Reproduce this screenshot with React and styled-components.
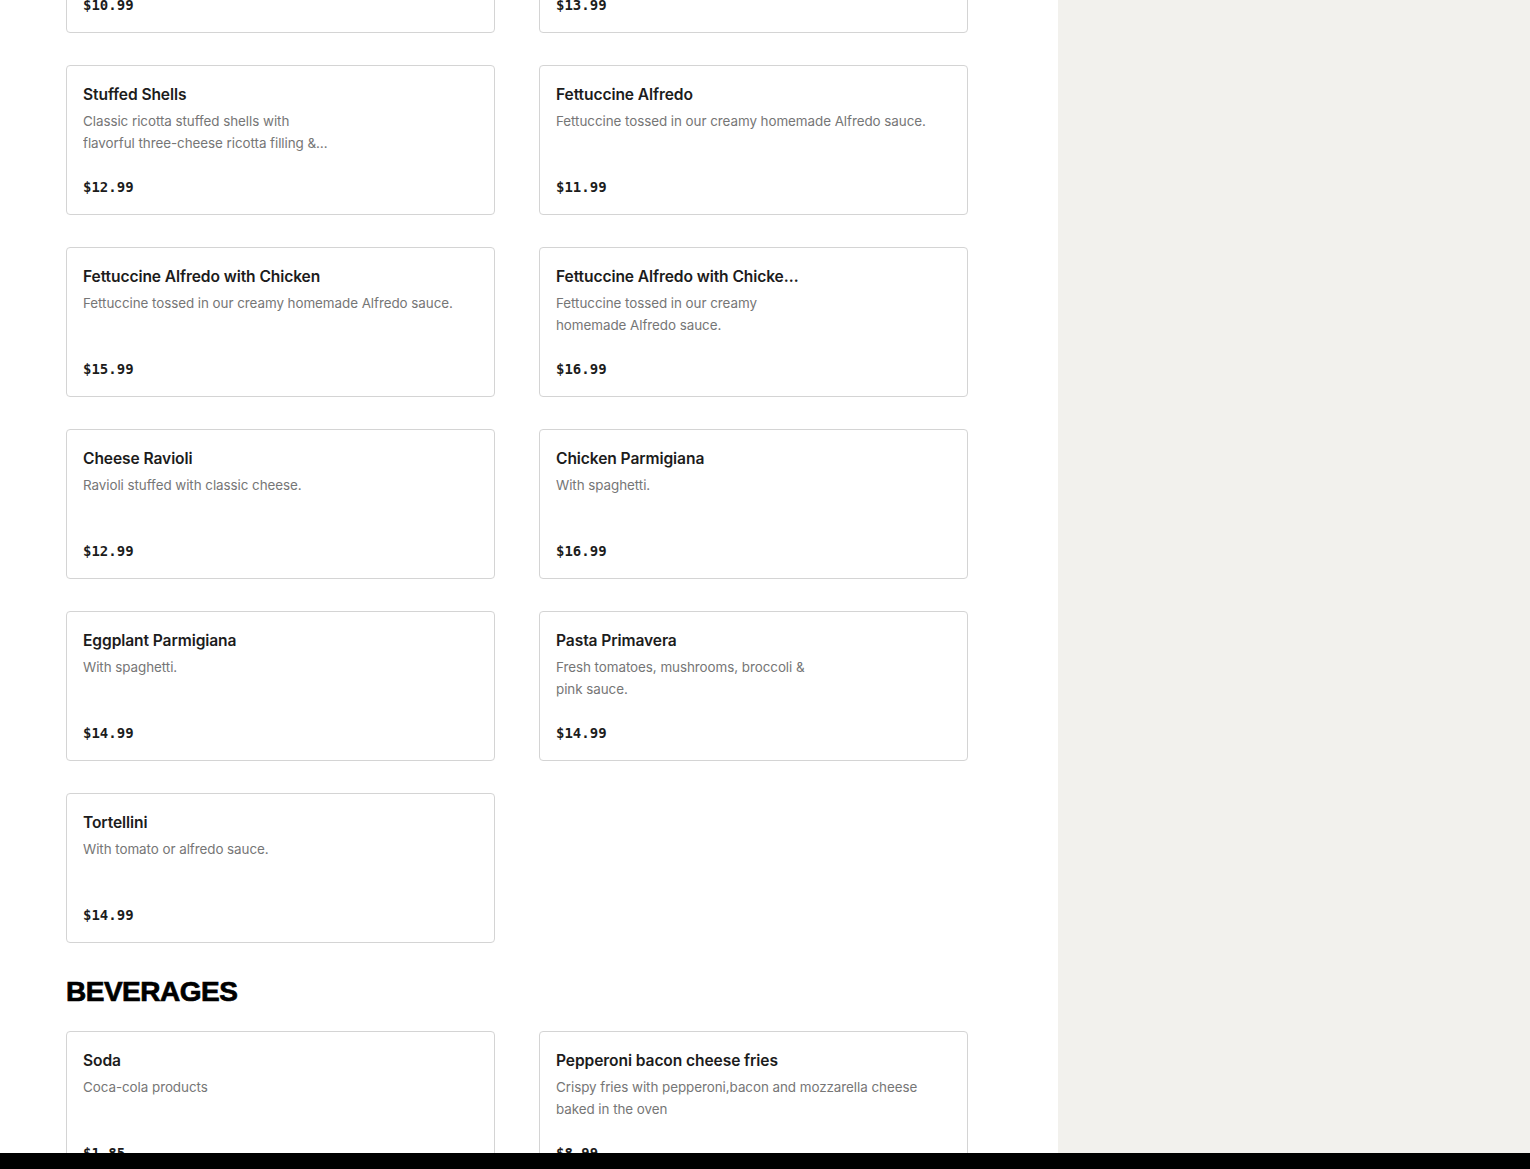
import styled, { createGlobalStyle } from "styled-components";

const GlobalStyle = createGlobalStyle`
  html, body {
    margin: 0;
    padding: 0;
    background: #fff;
    overflow: hidden;
  }
  body {
    font-family: "Inter", "Liberation Sans", sans-serif;
    color: #191919;
  }
`;

const Page = styled.div`
  display: grid;
  grid-template-columns: 1058px 1fr;
  height: 1169px;
  overflow: hidden;
`;

const Main = styled.main`
  padding: 0 0 0 66px;
  margin-top: -117px;
`;

const Aside = styled.aside`
  background-color: #f2f1ed;
`;

const Section = styled.section`
  margin-bottom: 32px;
`;

const SectionTitle = styled.h2`
  margin: 0 0 22px;
  font-family: "Liberation Sans", Arial, sans-serif;
  font-size: 28px;
  line-height: 34px;
  font-weight: 700;
  letter-spacing: -0.5px;
  color: #000;
  -webkit-text-stroke: 0.7px #000;
`;

const Grid = styled.div`
  display: grid;
  grid-template-columns: 429px 429px;
  column-gap: 44px;
  row-gap: 32px;
`;

const Card = styled.div`
  box-sizing: border-box;
  height: 150px;
  border: 1px solid #d4d4d4;
  border-radius: 4px;
  padding: 17px 16px 17px;
  display: flex;
  flex-direction: column;
  background: #fff;
`;

const Info = styled.div`
  max-width: ${(p) => (p.$narrow ? "256px" : "100%")};
`;

const Name = styled.div`
  max-width: ${(p) => (p.$narrow ? "245px" : "100%")};
  font-size: 15.6px;
  line-height: 24px;
  font-weight: 600;
  letter-spacing: -0.1px;
  color: #1c1c1c;
  white-space: nowrap;
  overflow: hidden;
  text-overflow: ellipsis;
`;

const Desc = styled.div`
  margin-top: 3px;
  font-size: 13.4px;
  line-height: 22px;
  letter-spacing: -0.05px;
  color: #767676;
  display: -webkit-box;
  -webkit-line-clamp: 2;
  -webkit-box-orient: vertical;
  overflow: hidden;
`;

const Price = styled.div`
  margin-top: auto;
  font-family: "DejaVu Sans Mono", "Liberation Mono", monospace;
  font-size: 14px;
  line-height: 20px;
  font-weight: 700;
  color: #1c1c1c;
`;

const BottomBar = styled.div`
  position: fixed;
  left: 0;
  right: 0;
  bottom: 0;
  height: 16px;
  background: #000;
`;

const pasta = [
  { name: "Baked Ziti", desc: "Ziti baked with marinara sauce & mozzarella cheese.", price: "10.99" },
  { name: "Lasagna", desc: "Layers of pasta, meat sauce, ricotta & mozzarella cheese.", price: "13.99", narrow: true },
  {
    name: "Stuffed Shells",
    desc: "Classic ricotta stuffed shells with flavorful three-cheese ricotta filling & topped with marinara sauce.",
    price: "12.99",
    narrow: true,
  },
  { name: "Fettuccine Alfredo", desc: "Fettuccine tossed in our creamy homemade Alfredo sauce.", price: "11.99" },
  { name: "Fettuccine Alfredo with Chicken", desc: "Fettuccine tossed in our creamy homemade Alfredo sauce.", price: "15.99" },
  {
    name: "Fettuccine Alfredo with Chicken & Broccoli",
    desc: "Fettuccine tossed in our creamy homemade Alfredo sauce.",
    price: "16.99",
    narrow: true,
  },
  { name: "Cheese Ravioli", desc: "Ravioli stuffed with classic cheese.", price: "12.99" },
  { name: "Chicken Parmigiana", desc: "With spaghetti.", price: "16.99" },
  { name: "Eggplant Parmigiana", desc: "With spaghetti.", price: "14.99" },
  { name: "Pasta Primavera", desc: "Fresh tomatoes, mushrooms, broccoli & pink sauce.", price: "14.99", narrow: true },
  { name: "Tortellini", desc: "With tomato or alfredo sauce.", price: "14.99" },
];

const beverages = [
  { name: "Soda", desc: "Coca-cola products", price: "1.85" },
  {
    name: "Pepperoni bacon cheese fries",
    desc: "Crispy fries with pepperoni,bacon and mozzarella cheese baked in the oven",
    price: "8.99",
  },
];

function MenuCard({ item }) {
  return (
    <Card>
      <Info $narrow={item.narrow}>
        <Name $narrow={item.narrow}>{item.name}</Name>
        <Desc>{item.desc}</Desc>
      </Info>
      <Price>${item.price}</Price>
    </Card>
  );
}

export default function App() {
  return (
    <>
      <GlobalStyle />
      <Page>
        <Main>
          <Section>
            <Grid>
              {pasta.map((item, i) => (
                <MenuCard key={i} item={item} />
              ))}
            </Grid>
          </Section>
          <Section>
            <SectionTitle>BEVERAGES</SectionTitle>
            <Grid>
              {beverages.map((item, i) => (
                <MenuCard key={i} item={item} />
              ))}
            </Grid>
          </Section>
        </Main>
        <Aside />
      </Page>
      <BottomBar />
    </>
  );
}
